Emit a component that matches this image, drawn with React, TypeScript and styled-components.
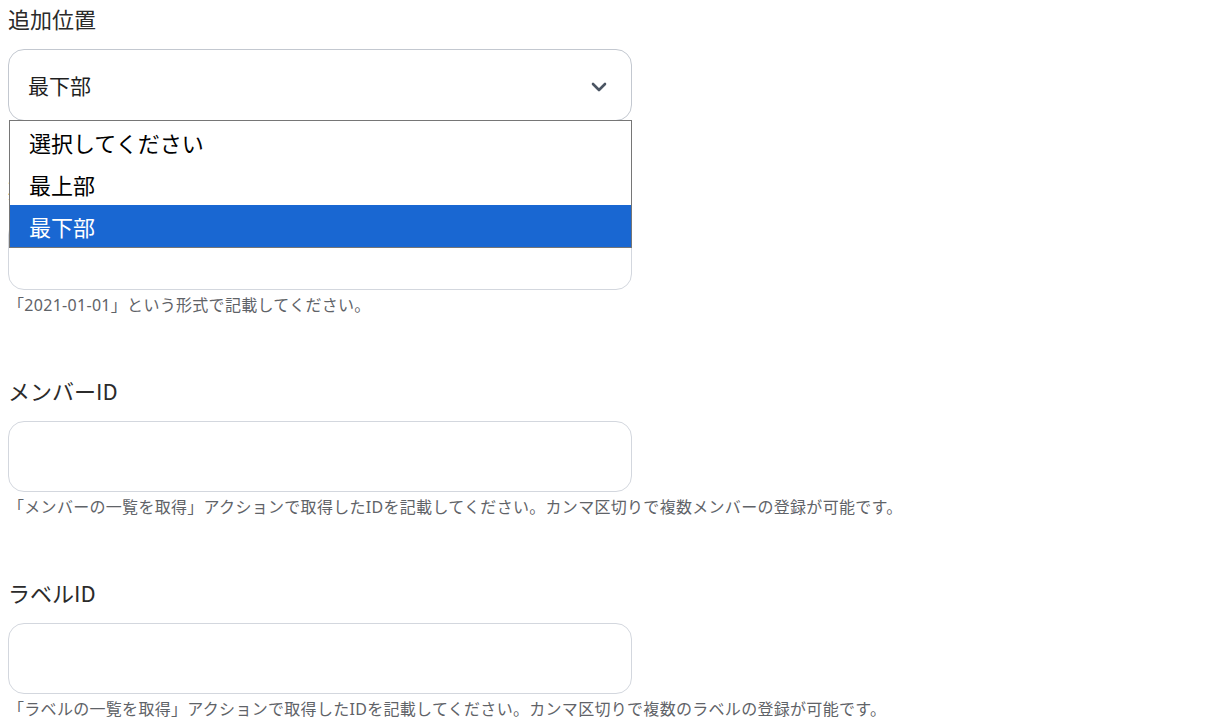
import styled, {createGlobalStyle} from 'styled-components'

const Global = createGlobalStyle`
    body {
        margin: 0;
        background: #ffffff;
        font-family: "Noto Sans", "Noto Sans CJK JP", sans-serif;
    }
`
const Page = styled.div`
    padding: 2px 8px 0 8px;
    width: 624px;
`
const Field = styled.div<{tight?: boolean}>`
    display: flex;
    flex-direction: column;
    margin-bottom: ${(props) => (props.tight ? '51px' : '57px')};
    &:last-child {
        margin-bottom: 0;
    }
`
const Label = styled.div`
    font-family: "Noto Sans CJK JP", sans-serif;
    font-size: 22px;
    line-height: 32px;
    color: #2b2b2b;
    margin-bottom: 15px;
`
const SelectWrap = styled.div`
    position: relative;
`
const SelectBox = styled.div`
    box-sizing: border-box;
    height: 72px;
    border: 1px solid #c3c8d0;
    border-radius: 16px;
    display: flex;
    align-items: center;
    justify-content: space-between;
    padding: 0 24px 0 19px;
    font-size: 21px;
    color: #1f1f1f;
`
const Menu = styled.div`
    position: absolute;
    top: 71px;
    left: 1px;
    right: 0;
    border: 1px solid #767676;
    background: #ffffff;
    z-index: 2;
    font-family: "Noto Sans CJK JP", sans-serif;
`
const Option = styled.div<{selected?: boolean}>`
    height: 42px;
    display: flex;
    align-items: center;
    padding-left: 19px;
    font-size: 22px;
    color: ${(props) => (props.selected ? '#ffffff' : '#000000')};
    background: ${(props) => (props.selected ? '#1967d2' : 'transparent')};
`
const Input = styled.div`
    box-sizing: border-box;
    height: 71px;
    border: 1px solid #d3d7de;
    border-radius: 16px;
`
const Help = styled.div`
    margin-top: 3px;
    font-size: 16px;
    line-height: 24px;
    letter-spacing: 0.3px;
    color: #5f6368;
    white-space: nowrap;
`

function Chevron() {
    return (
        <svg width="16" height="10" viewBox="0 0 16 10" style={{marginTop: 3}}>
            <path d="M2 2 L8 8 L14 2" fill="none" stroke="#4b5563" strokeWidth="2.6" strokeLinecap="round" strokeLinejoin="round" />
        </svg>
    )
}

export default function App() {
    return (
        <>
            <Global />
            <Page>
                <Field tight>
                    <Label>追加位置</Label>
                    <SelectWrap>
                        <SelectBox>
                            <span>最下部</span>
                            <Chevron />
                        </SelectBox>
                        <Menu>
                            <Option>選択してください</Option>
                            <Option>最上部</Option>
                            <Option selected>最下部</Option>
                        </Menu>
                    </SelectWrap>
                </Field>
                <Field>
                    <Label>期日</Label>
                    <Input />
                    <Help>「2021-01-01」という形式で記載してください。</Help>
                </Field>
                <Field>
                    <Label>メンバーID</Label>
                    <Input />
                    <Help>「メンバーの一覧を取得」アクションで取得したIDを記載してください。カンマ区切りで複数メンバーの登録が可能です。</Help>
                </Field>
                <Field>
                    <Label>ラベルID</Label>
                    <Input />
                    <Help>「ラベルの一覧を取得」アクションで取得したIDを記載してください。カンマ区切りで複数のラベルの登録が可能です。</Help>
                </Field>
            </Page>
        </>
    )
}
